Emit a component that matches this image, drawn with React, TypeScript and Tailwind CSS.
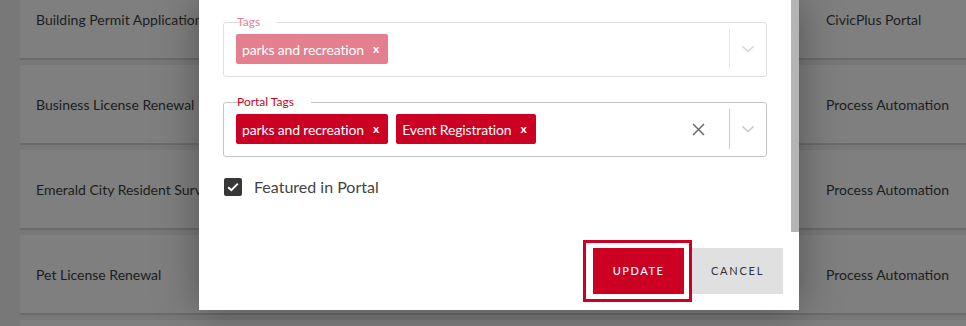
import React from 'react'

const rows = [
  { name: 'Building Permit Application', type: 'CivicPlus Portal' },
  { name: 'Business License Renewal', type: 'Process Automation' },
  { name: 'Emerald City Resident Survey', type: 'Process Automation' },
  { name: 'Pet License Renewal', type: 'Process Automation' },
]

function Chevron({ color }: { color: string }) {
  return (
    <svg width="14" height="8" viewBox="0 0 14 8" fill="none">
      <path d="M1.5 1.5 L7 6.5 L12.5 1.5" stroke={color} strokeWidth="1.6" />
    </svg>
  )
}

function Chip({ label, light }: { label: string; light?: boolean }) {
  return (
    <span
      className={`flex items-center h-[30px] rounded-[2px] pl-[6px] pr-[9px] text-white text-[14px] ${
        light ? 'bg-[#e47f8e]' : 'bg-[#cc0022]'
      }`}
    >
      <span className="tracking-[-0.15px]">{label}</span>
      <span className="ml-[9px] font-bold text-[12px] leading-none">x</span>
    </span>
  )
}

export default function App() {
  return (
    <div
      className="relative w-[966px] h-[326px] overflow-hidden bg-[#787878]"
      style={{ fontFamily: 'Lato, "Open Sans", Arial, sans-serif' }}
    >
      {/* list behind the dialog */}
      <div className="pl-5 -mt-5 flex flex-col gap-[5px]">
        {rows.map((r) => (
          <div
            key={r.name}
            className="h-[80px] flex items-center bg-[#7f7f7f] border-b-2 border-[#6b6b6b] text-[14px] text-[#1d1d1d]"
          >
            <span className="pl-4 w-[806px] whitespace-nowrap">{r.name}</span>
            <span className="whitespace-nowrap">{r.type}</span>
          </div>
        ))}
        <div className="h-[80px] bg-[#7f7f7f]" />
      </div>

      {/* dialog */}
      <div className="absolute left-[199px] top-0 w-[600px] h-[310px] bg-white flex flex-col shadow-[0_0_40px_rgba(0,0,0,0.35)]">
        <div className="h-[232px] flex">
          <div className="flex-1 pl-6 pr-6 pt-[15px]">
            {/* Tags */}
            <fieldset className="border border-[#dfdfdf] rounded-[3px] pl-3 pb-[12px]">
              <legend className="ml-[8px] px-[5px] -translate-x-[12px] text-[12px] leading-[14px] text-[#e8808f]">
                Tags
              </legend>
              <div className="flex items-center h-[30px] mt-[5px]">
                <div className="flex-1 flex gap-2">
                  <Chip label="parks and recreation" light />
                </div>
                <span className="w-px h-[40px] -my-[5px] bg-[#e8e8e8]" />
                <span className="w-[36px] flex justify-center">
                  <Chevron color="#d4d4d4" />
                </span>
              </div>
            </fieldset>

            {/* Portal Tags */}
            <fieldset className="mt-[18px] border border-[#c4c4c4] rounded-[3px] pl-3 pb-[12px]">
              <legend className="ml-[8px] px-[5px] -translate-x-[12px] text-[12px] leading-[14px] text-[#cc0022]">
                Portal Tags
              </legend>
              <div className="flex items-center h-[30px] mt-[5px]">
                <div className="flex-1 flex gap-2">
                  <Chip label="parks and recreation" />
                  <Chip label="Event Registration" />
                </div>
                <span className="mr-[24px] flex">
                  <svg width="13" height="13" viewBox="0 0 13 13">
                    <path d="M1 1 L12 12 M12 1 L1 12" stroke="#6b6b6b" strokeWidth="1.5" />
                  </svg>
                </span>
                <span className="w-px h-[40px] -my-[5px] bg-[#cccccc]" />
                <span className="w-[36px] flex justify-center">
                  <Chevron color="#c8c8c8" />
                </span>
              </div>
            </fieldset>

            {/* Featured */}
            <label className="mt-[18px] flex items-center gap-3 pl-px">
              <span className="w-[18px] h-[18px] rounded-[2px] bg-[#383838] flex items-center justify-center">
                <svg width="12" height="10" viewBox="0 0 12 10" fill="none">
                  <path d="M1.2 5.2 L4.4 8.2 L10.8 1.6" stroke="#fff" strokeWidth="2" />
                </svg>
              </span>
              <span className="text-[16px] text-[#444]">Featured in Portal</span>
            </label>
          </div>
          <div className="w-2 bg-[#b4b4b4]" />
        </div>

        {/* footer */}
        <div className="flex justify-end items-start pr-4 pt-2">
          <div className="border-[3px] border-[#cc0022] pl-[7px] pr-[5px] py-[5px]">
            <button className="w-[91px] h-[46px] bg-[#cc0022] text-white text-[11px] font-medium tracking-[0.14em]">
              UPDATE
            </button>
          </div>
          <button className="mt-[8px] w-[91px] h-[46px] bg-[#e0e0e0] text-[#2f3340] text-[11px] tracking-[0.16em]">
            CANCEL
          </button>
        </div>
      </div>
    </div>
  )
}
